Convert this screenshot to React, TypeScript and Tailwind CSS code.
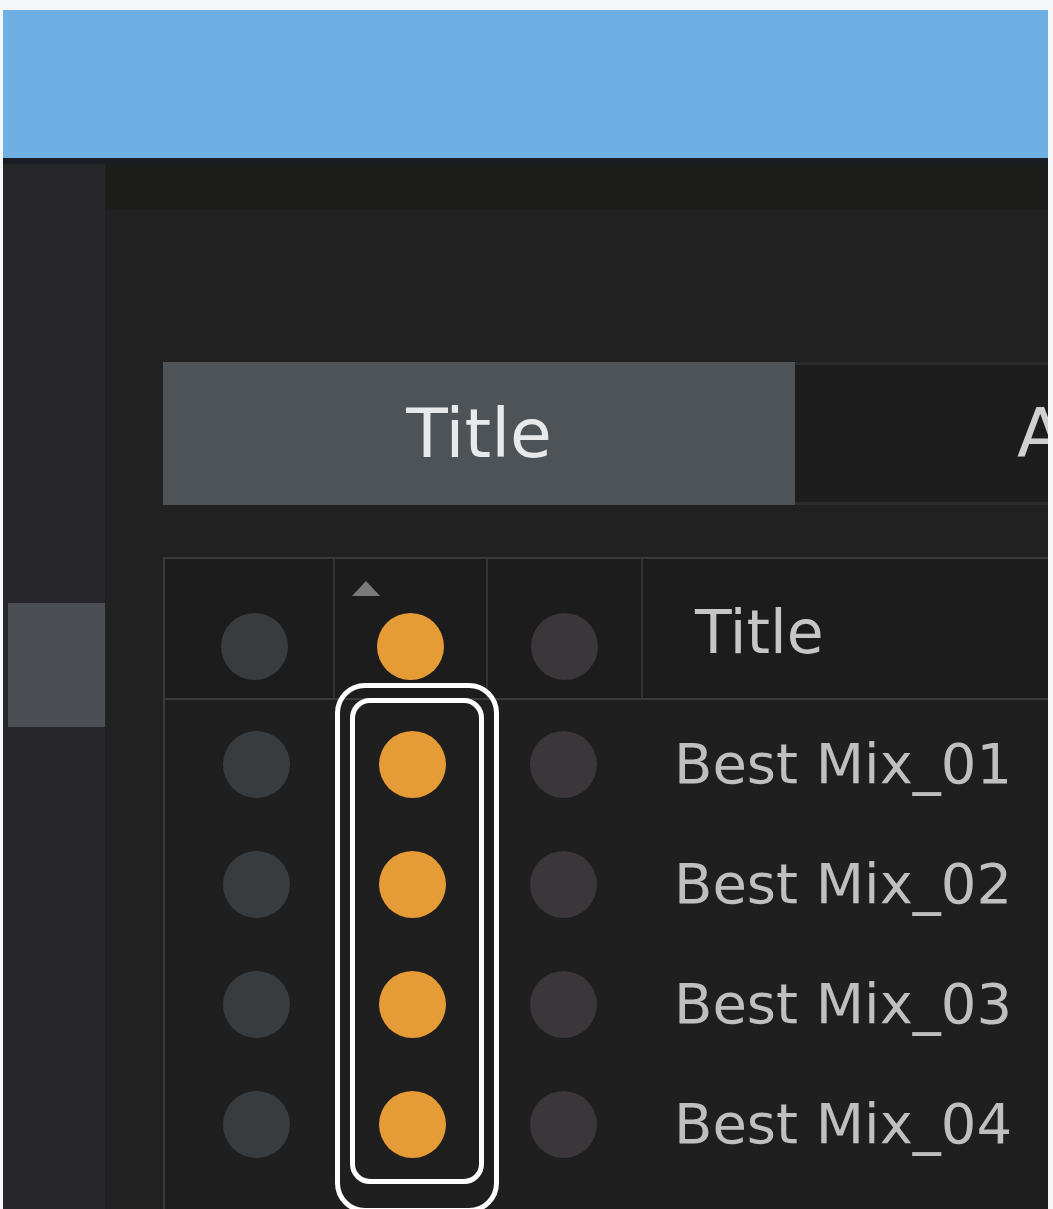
import React from "react";

const rows = ["Best Mix_01", "Best Mix_02", "Best Mix_03", "Best Mix_04"];

function Dot({ color }: { color: string }) {
  return <div className={`h-[67px] w-[67px] rounded-full ${color}`} />;
}

export default function App() {
  return (
    <div
      className="flex h-[1209px] w-[1053px] flex-col overflow-hidden bg-[#f4f6f8] pl-[3px] pr-[5px] pt-[10px]"
      style={{ fontFamily: '"DejaVu Sans", Verdana, sans-serif' }}
    >
      <div className="h-[148px] shrink-0 bg-[#6eb0e4]" />
      <div className="flex flex-1 border-t-[6px] border-[#1b1c24]">
        <div className="flex w-[102px] shrink-0 flex-col bg-[#27272b]">
          <div className="mt-[439px] ml-[5px] h-[124px] w-[97px] bg-[#4b4e53]" />
        </div>
        <div className="flex flex-1 flex-col overflow-hidden bg-[#212121]">
          <div className="h-[46px] shrink-0 bg-[#1d1e1b]" />
          <div className="h-[152px] shrink-0" />
          <div className="ml-[58px] flex h-[143px] shrink-0">
            <div className="flex w-[632px] shrink-0 items-center justify-center bg-[#4e5358] text-[68px] leading-none text-[#e8e9ea]">
              Title
            </div>
            <div className="flex flex-1 items-center overflow-hidden whitespace-nowrap border-y-[3px] border-[#2c2c2c] bg-[#1d1d1d] pl-[222px] text-[68px] leading-none text-[#d0d0d0]">
              Artist
            </div>
          </div>
          <div className="h-[52px] shrink-0" />
          <div className="relative ml-[58px] flex-1 border-l-2 border-t-2 border-[#3a3a3a] bg-[#1f1f1f]">
            <div className="flex h-[141px] border-b-2 border-[#3a3a3a] bg-[#1c1c1c]">
              <div className="flex w-[170px] shrink-0 items-center justify-center border-r-2 border-[#333] pl-[10px] pt-[35px]">
                <Dot color="bg-[#393c3e]" />
              </div>
              <div className="relative flex w-[153px] shrink-0 items-center justify-center border-r-2 border-[#333] pt-[35px]">
                <div className="absolute left-[17px] top-[22px] h-0 w-0 border-x-[14px] border-b-[15px] border-x-transparent border-b-[#7a7a7a]" />
                <Dot color="bg-[#e59b36]" />
              </div>
              <div className="flex w-[155px] shrink-0 items-center justify-center border-r-2 border-[#333] pt-[35px]">
                <Dot color="bg-[#3a3639]" />
              </div>
              <div className="flex flex-1 items-center pl-[52px] pt-[6px] text-[60px] leading-none text-[#c6c6c6]">
                Title
              </div>
            </div>
            <div className="h-[4px]" />
            {rows.map((r) => (
              <div key={r} className="flex h-[120px]">
                <div className="flex w-[172px] shrink-0 items-center justify-center pl-[10px]">
                  <Dot color="bg-[#393c3e]" />
                </div>
                <div className="flex w-[150px] shrink-0 items-center justify-center">
                  <Dot color="bg-[#e59b36]" />
                </div>
                <div className="flex w-[152px] shrink-0 items-center justify-center">
                  <Dot color="bg-[#3a3639]" />
                </div>
                <div className="flex flex-1 items-center whitespace-nowrap pl-[35px] text-[56px] leading-none text-[#bfbfbf]">
                  {r}
                </div>
              </div>
            ))}
            <div className="absolute left-[170px] top-[124px] h-[530px] w-[164px] rounded-[30px] border-[5px] border-white p-[10px]">
              <div className="h-[486px] w-full rounded-[20px] border-[5px] border-white" />
            </div>
          </div>
        </div>
      </div>
    </div>
  );
}
